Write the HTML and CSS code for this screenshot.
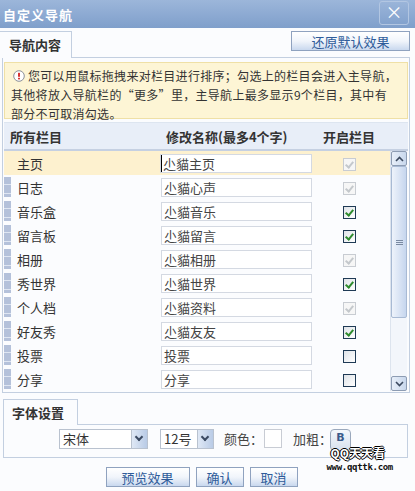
FILE: index.html
```html
<!DOCTYPE html>
<html lang="zh-CN">
<head>
    <meta charset="UTF-8">
    <title>自定义导航</title>
    <link rel="stylesheet" href="styles.css">
</head>
<body>

<div class="dialog">
    <div class="titlebar">
        <span class="title">自定义导航</span>
        <span class="close">×</span>
    </div>

    <div class="tabbar">
        <div class="tab">导航内容</div>
        <div class="tab-fill"><button class="btn btn-reset">还原默认效果</button></div>
    </div>

    <div class="panel">
        <div class="notice">
            <svg class="notice-icon" width="12" height="12" viewBox="0 0 12 12">
                <circle cx="6" cy="6" r="5.3" fill="#fff" stroke="#8a8f9a"/>
                <rect x="5.1" y="2.8" width="1.8" height="4" fill="#d42020"/>
                <rect x="5.1" y="7.8" width="1.8" height="1.6" fill="#d42020"/>
            </svg>您可以用鼠标拖拽来对栏目进行排序；勾选上的栏目会进入主导航，<br>其他将放入导航栏的“更多”里，主导航上最多显示9个栏目，其中有<br>部分不可取消勾选。
        </div>

        <div class="grid">
            <div class="grid-head">
                <span>所有栏目</span>
                <span>修改名称(最多4个字)</span>
                <span class="c3">开启栏目</span>
            </div>
            <div class="grid-body">
                <div class="rows">
                    <div class="row row-on"><span class="name">主页</span><span class="field caret">尐貓主页</span><span class="c3"><i class="cb cb-lock"></i></span></div>
                    <div class="row"><i class="grip"></i><span class="name">日志</span><span class="field">尐貓心声</span><span class="c3"><i class="cb cb-lock"></i></span></div>
                    <div class="row"><i class="grip"></i><span class="name">音乐盒</span><span class="field">尐貓音乐</span><span class="c3"><i class="cb cb-on"></i></span></div>
                    <div class="row"><i class="grip"></i><span class="name">留言板</span><span class="field">尐貓留言</span><span class="c3"><i class="cb cb-on"></i></span></div>
                    <div class="row"><i class="grip"></i><span class="name">相册</span><span class="field">尐貓相册</span><span class="c3"><i class="cb cb-lock"></i></span></div>
                    <div class="row"><i class="grip"></i><span class="name">秀世界</span><span class="field">尐貓世界</span><span class="c3"><i class="cb cb-on"></i></span></div>
                    <div class="row"><i class="grip"></i><span class="name">个人档</span><span class="field">尐貓资料</span><span class="c3"><i class="cb cb-lock"></i></span></div>
                    <div class="row"><i class="grip"></i><span class="name">好友秀</span><span class="field">尐貓友友</span><span class="c3"><i class="cb cb-on"></i></span></div>
                    <div class="row"><i class="grip"></i><span class="name">投票</span><span class="field">投票</span><span class="c3"><i class="cb"></i></span></div>
                    <div class="row"><i class="grip"></i><span class="name">分享</span><span class="field">分享</span><span class="c3"><i class="cb"></i></span></div>
                </div>
                <div class="scrollbar">
                    <div class="sb-btn">
                        <svg width="9" height="6" viewBox="0 0 9 6"><path d="M1 5 L4.5 1.5 L8 5" fill="none" stroke="#3c4a60" stroke-width="1.6"/></svg>
                    </div>
                    <div class="sb-thumb"><span class="sb-grip"></span></div>
                    <div class="sb-track"></div>
                    <div class="sb-btn">
                        <svg width="9" height="6" viewBox="0 0 9 6"><path d="M1 1 L4.5 4.5 L8 1" fill="none" stroke="#3c4a60" stroke-width="1.6"/></svg>
                    </div>
                </div>
            </div>
        </div>
    </div>

    <div class="tabbar tabbar-font">
        <div class="tab">字体设置</div>
    </div>
    <div class="panel panel-font">
        <div class="select sel-face"><span>宋体</span><i class="arrow"></i></div>
        <div class="select sel-size"><span>12号</span><i class="arrow"></i></div>
        <span class="opt">颜色：</span><span class="swatch"></span>
        <span class="opt opt-bold">加粗：</span><span class="bold-btn">B</span>
    </div>

    <div class="actions">
        <button class="btn btn-preview">预览效果</button>
        <button class="btn btn-ok">确认</button>
        <button class="btn btn-ok">取消</button>
    </div>

    <div class="mark">
        <span class="mark-name">QQ天天看</span>
        <span class="mark-url">www.qqttk.com</span>
    </div>
</div>

</body>
</html>
```

FILE: styles.css
```css
/* 自定义导航 弹出层 */
body {
    margin: 0;
    font-family: "Noto Sans CJK SC", "DejaVu Sans", sans-serif;
    font-size: 12px;
    color: #333;
    background: #fbfcfe;
}
.dialog {
    position: relative;
    width: 415px;
    height: 491px;
    overflow: hidden;
}

/* 标题栏 */
.titlebar {
    height: 28px;
    background: linear-gradient(#9cb6da, #7f9fcb);
    display: flex;
    align-items: center;
    justify-content: space-between;
    padding: 0 6px 0 3px;
}
.title {
    color: #fff;
    font-size: 13px;
    font-weight: bold;
    letter-spacing: 1px;
}
.close {
    width: 28px;
    height: 22px;
    border: 1px solid #b2c6e2;
    border-radius: 3px;
    color: #fff;
    font-size: 17px;
    line-height: 20px;
    text-align: center;
    margin-top: -2px;
}

/* 选项卡 */
.tabbar {
    display: flex;
    height: 29px;
    margin-top: 1px;
}
.tab {
    width: 72px;
    border-top: 1px solid #c3cfe0;
    border-right: 1px solid #c3cfe0;
    margin-top: 2px;
    font-weight: bold;
    font-size: 13px;
    line-height: 26px;
    padding-left: 9px;
    box-sizing: border-box;
    background: #fbfcfe;
}
.tab-fill {
    flex: 1;
    border-bottom: 1px solid #c3cfe0;
    margin-right: 5px;
    display: flex;
    justify-content: flex-end;
    align-items: flex-start;
    padding-top: 2px;
}

.btn {
    font-family: inherit;
    font-size: 13px;
    color: #2f5c9a;
    border: 1px solid #8fa2bf;
    background: linear-gradient(#ffffff 0%, #f1f5fb 50%, #c9d8ee 100%);
    height: 20px;
    padding: 0;
    line-height: 17px;
}
.btn-reset {
    width: 119px;
}

.panel {
    margin: 0 5px 0 2px;
    border: 1px solid #c3cfe0;
    border-top: none;
    padding: 4px 1px 1px 1px;
}

/* 提示 */
.notice {
    background: #fdf5d5;
    border: 1px solid #efe0a6;
    padding: 3px 4px 1px 6px;
    line-height: 19px;
    font-size: 12px;
    letter-spacing: 0.3px;
    height: 51px;
    white-space: nowrap;
}
.notice-icon {
    margin: 0 3px 0 2px;
    vertical-align: -1px;
}

/* 栏目列表 */
.grid {
    margin-top: 3px;
}
.grid-head,
.row {
    display: grid;
    grid-template-columns: 157px 151px 1fr;
    align-items: center;
}
.grid-head {
    height: 26px;
    background: #e8eef8;
    border-top: 1px solid #dde5f0;
    border-bottom: 2px solid #c5d0e2;
    font-weight: bold;
    font-size: 13px;
    padding-right: 17px;
}
.grid-head span:first-child {
    padding-left: 6px;
}
.grid-head span:nth-child(2) {
    padding-left: 5px;
}
.c3 {
    text-align: center;
}
.grid-head .c3 {
    padding-right: 5px;
}

.grid-body {
    display: flex;
    height: 240px;
}
.rows {
    flex: 1;
}
.row {
    height: 24px;
    position: relative;
    font-size: 13px;
}
.row-on {
    background: #fdf1cf;
}
.grip {
    position: absolute;
    left: 0;
    top: 2px;
    width: 7px;
    height: 20px;
    background: #b4c1da;
    background-image: repeating-linear-gradient(#b4c1da 0 7px, #dfe6f2 7px 8px, #b4c1da 8px 9px);
}
.name {
    padding-left: 13px;
}
.field {
    height: 17px;
    border: 1px solid #d4d9e2;
    background: #fff;
    line-height: 17px;
    padding-left: 2px;
    color: #444;
}
.caret {
    box-shadow: inset 1px 0 0 #000;
    margin-left: -1px;
}

/* 复选框 */
.cb {
    display: inline-block;
    width: 11px;
    height: 11px;
    border: 1px solid #1f3a55;
    background: linear-gradient(135deg, #dfe3e8, #ffffff);
    vertical-align: middle;
    position: relative;
    margin-right: 3px;
}
.cb-on::after,
.cb-lock::after {
    content: "";
    position: absolute;
    left: 3px;
    top: 1px;
    width: 3px;
    height: 6px;
    border: solid #2e8b2e;
    border-width: 0 2px 2px 0;
    transform: rotate(40deg);
}
.cb-lock {
    border-color: #c8ccd2;
    background: #f6f6f6;
}
.cb-lock::after {
    border-color: #c4c8cc;
}

/* 滚动条 */
.scrollbar {
    width: 16px;
    margin: 0 1px 0 0;
    display: flex;
    flex-direction: column;
    background: #f3f6fb;
    border-left: 1px solid #dde4ee;
}
.sb-btn {
    height: 15px;
    border: 1px solid #8d9cb3;
    border-radius: 2px;
    background: linear-gradient(90deg, #e8eff9, #c8d7ec);
    display: flex;
    align-items: center;
    justify-content: center;
    box-sizing: border-box;
}
.sb-thumb {
    height: 150px;
    border: 1px solid #a8bad4;
    border-radius: 2px;
    background: linear-gradient(90deg, #eef3fb, #c6d6ee);
    display: flex;
    align-items: center;
    justify-content: center;
}
.sb-grip {
    width: 7px;
    height: 5px;
    background: repeating-linear-gradient(#7a8aa2 0 1px, transparent 1px 2px);
}
.sb-track {
    flex: 1;
}

/* 字体设置 */
.tabbar-font {
    margin-top: 6px;
    height: 26px;
    margin-left: 3px;
    margin-right: 7px;
}
.tabbar-font .tab {
    width: 75px;
    border-left: 1px solid #c3cfe0;
    padding-left: 8px;
    margin-top: 0;
    line-height: 25px;
}
.tabbar-font::after {
    content: "";
    flex: 1;
    border-bottom: 1px solid #c3cfe0;
}
.panel-font {
    margin: 0 7px 0 3px;
    border-left: 1px solid #c3cfe0;
    height: 33px;
    padding: 4px 0 0 55px;
    box-sizing: border-box;
    display: flex;
    align-items: flex-start;
    font-size: 13px;
}
.select {
    height: 18px;
    border: 1px solid #b9c2cf;
    background: #fff;
    display: flex;
    justify-content: space-between;
    align-items: stretch;
}
.select span {
    padding-left: 3px;
    line-height: 18px;
}
.sel-face {
    width: 87px;
}
.sel-size {
    width: 52px;
    margin-left: 12px;
}
.arrow {
    width: 15px;
    border-left: 1px solid #b9c2cf;
    background: linear-gradient(90deg, #dfe8f5, #b9cbe6);
    position: relative;
}
.arrow::after {
    content: "";
    position: absolute;
    left: 4px;
    top: 4px;
    width: 4px;
    height: 4px;
    border: solid #3b4a62;
    border-width: 0 2px 2px 0;
    transform: rotate(45deg);
}
.opt {
    margin-left: 10px;
    line-height: 20px;
    color: #444;
}
.opt-bold {
    margin-left: 11px;
}
.swatch {
    width: 16px;
    height: 17px;
    border: 1px solid #c8ccd4;
    background: #fff;
    margin-left: 1px;
}
.bold-btn {
    width: 19px;
    height: 20px;
    border: 1px solid #9aa8bc;
    border-radius: 4px;
    background: linear-gradient(#f4f7fb, #d8e1ee);
    font-family: "DejaVu Sans", sans-serif;
    font-weight: bold;
    font-size: 11px;
    color: #3b5a8a;
    text-align: center;
    line-height: 16px;
    margin-left: -2px;
}

/* 底部按钮 */
.actions {
    display: flex;
    justify-content: center;
    gap: 6px;
    margin-top: 9px;
    padding-right: 12px;
}
.btn-preview {
    width: 84px;
}
.btn-ok {
    width: 48px;
}

/* 角标 */
.mark {
    position: absolute;
    right: 22px;
    top: 446px;
    display: flex;
    flex-direction: column;
    align-items: flex-end;
}
.mark-name {
    color: #fff;
    font-size: 12px;
    font-weight: bold;
    text-shadow: 1px 0 #000, -1px 0 #000, 0 1px #000, 0 -1px #000;
    line-height: 13px;
    margin-right: 8px;
}
.mark-url {
    margin-top: 3px;
    color: #111;
    font-family: "DejaVu Sans Mono", monospace;
    font-size: 9px;
    font-weight: bold;
    letter-spacing: -0.3px;
    line-height: 10px;
}
```
